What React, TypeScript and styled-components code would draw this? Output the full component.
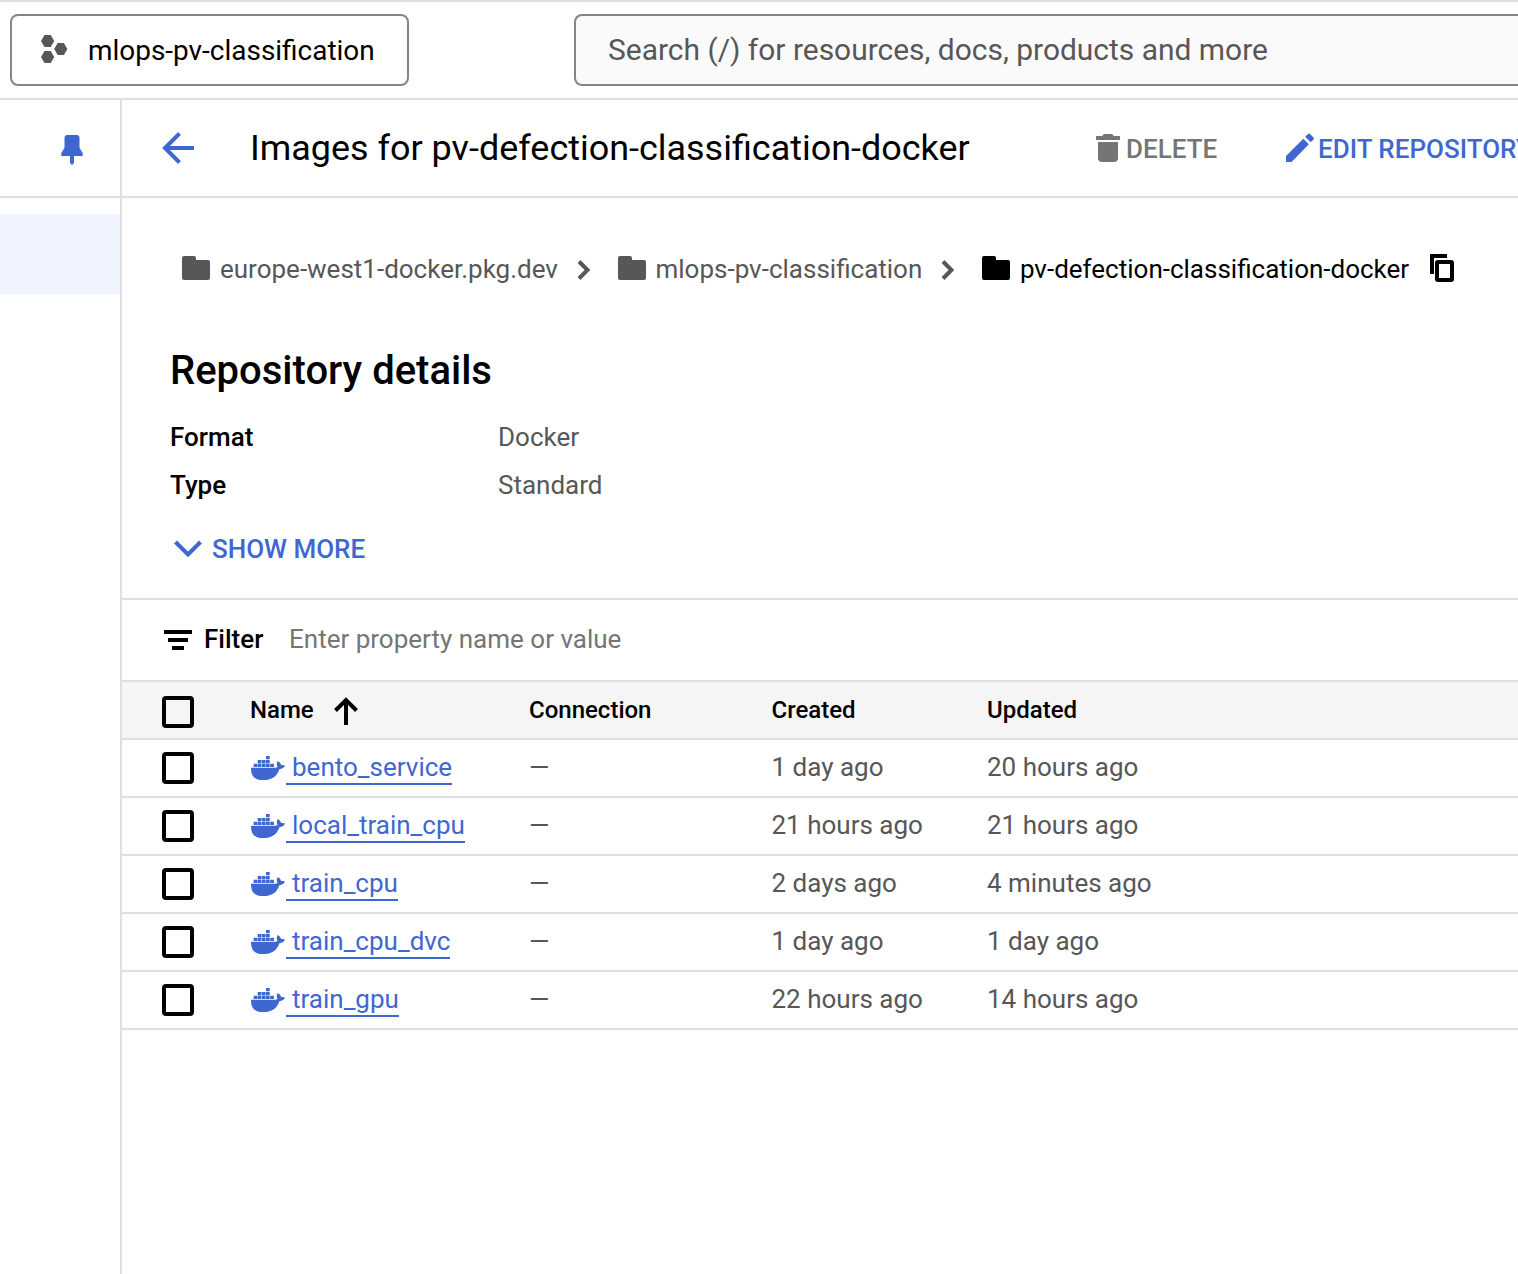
import React from "react";
import styled, { createGlobalStyle } from "styled-components";

const BLUE = "#3f67d2";
const GREY = "#575757";
const LINE = "#dfdfdf";

const GlobalStyle = createGlobalStyle`
  *, *::before, *::after { box-sizing: border-box; }
  body {
    margin: 0;
    background: #fff;
    color: #000;
    font-family: Roboto, "Liberation Sans", sans-serif;
    overflow: hidden;
  }
  svg { flex: none; }
`;

const Page = styled.div`
  display: flex;
  flex-direction: column;
  width: 1518px;
  height: 1274px;
  overflow: hidden;
  white-space: nowrap;
`;

const TopBar = styled.header`
  display: flex;
  flex: none;
  height: 100px;
  padding: 12px 0 0 10px;
  border-top: 2px solid ${LINE};
  border-bottom: 2px solid ${LINE};
`;

const ProjectPicker = styled.button`
  display: flex;
  flex: none;
  align-items: center;
  width: 399px;
  height: 72px;
  padding: 0 0 0 29px;
  gap: 19px;
  border: 2px solid #80868b;
  border-radius: 8px;
  background: #fff;
  color: #000;
  font: 400 27.95px/32px Roboto, sans-serif;

  svg { margin-bottom: 2px; }
`;

const ProjectName = styled.span`
  padding-top: 2px;
`;

const SearchBox = styled.div`
  display: flex;
  align-items: center;
  flex: none;
  width: 1000px;
  height: 72px;
  margin-left: 165px;
  padding: 0 0 2px 32px;
  border: 2px solid #80868b;
  border-radius: 8px;
  background: #fafafa;
  color: ${GREY};
  font-size: 29.95px;
`;

const Body = styled.div`
  display: flex;
  flex: 1;
  min-height: 0;
`;

const Sidebar = styled.nav`
  flex: none;
  width: 122px;
  border-right: 2px solid ${LINE};
`;

const PinCell = styled.div`
  height: 98px;
  padding: 34px 0 0 60px;
  border-bottom: 2px solid ${LINE};
`;

const ActiveItem = styled.div`
  height: 80px;
  margin-top: 16px;
  background: #f0f4ff;
`;

const Main = styled.main`
  flex: 1;
  min-width: 0;
  overflow: hidden;
`;

const TitleBar = styled.div`
  display: flex;
  align-items: center;
  height: 98px;
  padding-left: 40px;
  border-bottom: 2px solid ${LINE};
`;

const Title = styled.h1`
  flex: none;
  width: 846px;
  margin: 0 0 0 56px;
  font-size: 35.95px;
  font-weight: 400;
  line-height: 48px;
`;

const Action = styled.button<{ $color: string; $width: number }>`
  display: flex;
  flex: none;
  align-items: center;
  width: ${(p) => p.$width}px;
  padding: 0;
  border: 0;
  background: none;
  color: ${(p) => p.$color};
  font: 500 26px/32px Roboto, sans-serif;
  white-space: nowrap;
`;

const ActionLabel = styled.span`
  padding-top: 2px;
`;

const Crumbs = styled.div`
  display: flex;
  align-items: center;
  height: 142px;
  padding-left: 60px;
`;

const Crumb = styled.span<{ $current?: boolean }>`
  display: flex;
  align-items: center;
  gap: 10px;
  color: ${(p) => (p.$current ? "#000" : GREY)};
  font-size: 26px;
  line-height: 32px;

  svg { margin-bottom: 2px; }
`;

const Separator = styled.span`
  display: flex;
  padding: 2px 26.6px 0 19px;
`;

const CopyButton = styled.span`
  display: flex;
  margin-left: 20px;
  padding-bottom: 2px;
`;

const Details = styled.section`
  height: 260px;
  padding: 7px 0 0 48px;
  border-bottom: 2px solid ${LINE};
`;

const DetailsTitle = styled.h2`
  margin: 0 0 18px;
  font-size: 40px;
  font-weight: 500;
  line-height: 48px;
`;

const DetailRow = styled.div`
  display: grid;
  grid-template-columns: 328px 1fr;
  height: 48px;
  font-size: 26px;
  line-height: 48px;
`;

const DetailLabel = styled.span`
  font-weight: 500;
`;

const DetailValue = styled.span`
  color: ${GREY};
`;

const ShowMore = styled.button`
  display: flex;
  align-items: center;
  gap: 10px;
  margin: 24px 0 0;
  padding: 0 0 0 4px;
  border: 0;
  background: none;
  color: ${BLUE};
  font: 500 26px/32px Roboto, sans-serif;
`;

const FilterBar = styled.div`
  display: flex;
  align-items: center;
  height: 82px;
  padding: 0 0 2px 42px;
  border-bottom: 2px solid ${LINE};
  font-size: 26px;

  svg { margin-top: 2px; }
`;

const FilterLabel = styled.span`
  width: 85px;
  margin-left: 12px;
  font-weight: 500;
`;

const FilterHint = styled.span`
  color: #757575;
`;

const Row = styled.div<{ $head?: boolean }>`
  display: grid;
  grid-template-columns: 88px 279px 242.5px 215.5px 1fr;
  align-items: center;
  height: 58px;
  padding-left: 40px;
  border-bottom: 2px solid ${LINE};
  background: ${(p) => (p.$head ? "#f5f5f5" : "#fff")};
  color: ${(p) => (p.$head ? "#000" : GREY)};
  font-size: ${(p) => (p.$head ? 24 : 26)}px;
  font-weight: ${(p) => (p.$head ? 500 : 400)};
  line-height: 32px;
`;

const Checkbox = styled.span<{ $head?: boolean }>`
  width: 32px;
  height: 32px;
  margin-top: ${(p) => (p.$head ? 4 : 0)}px;
  border: 4px solid #000;
  border-radius: 4px;
`;

const SortHeader = styled.span`
  display: flex;
  align-items: center;
  gap: 19px;

  svg { margin-top: 2px; }
`;

const NameCell = styled.span`
  display: flex;
  align-items: center;
`;

const Cell = styled.span`
  padding-bottom: 2px;
`;

const ImageLink = styled.a`
  height: 34px;
  margin-bottom: 1px;
  padding-left: 6px;
  border-bottom: 2px solid ${BLUE};
  color: ${BLUE};
`;

const ProjectIcon = () => (
  <svg width="28" height="28" viewBox="0 0 28 28" fill={GREY}>
    <path d="M3.500 0h6.200L13.200 6 9.700 12H3.500L0 6zM3.500 16h6.200l3.500 6-3.500 6H3.500L0 22zM16.700 8h6.200l3.500 6-3.500 6h-6.200l-3.500-6z" />
  </svg>
);

const PinIcon = () => (
  <svg width="24" height="32" viewBox="0 0 24 32" fill={BLUE}>
    <path d="M7.500 1h9q3 0 3 3v10l3.200 5v3H14v7l-2 2-2-2v-7H1.300v-3l3.200-5V4q0-3 3-3z" />
  </svg>
);

const BackIcon = () => (
  <svg width="32" height="32" viewBox="0 0 32 32" fill="none" stroke={BLUE} strokeWidth="4">
    <path d="M32 16H3M17.500 1.500 3 16l14.500 14.500" />
  </svg>
);

const TrashIcon = () => (
  <svg width="30" height="30" viewBox="0 0 30 30" fill="currentColor">
    <path d="M0 3h6l2-2h8l2 2h6v4H0zM2 9h20v16q0 4-4 4H6q-4 0-4-4z" />
  </svg>
);

const PencilIcon = () => (
  <svg width="32" height="30" viewBox="0 0 32 30" fill="currentColor">
    <path d="M0 23 17.300 5.700l5.500 5.500L5.500 29H0zM19.200 3.800 22 1q1-1 2 0l3.500 3.500q1 1 0 2l-2.800 2.800z" />
  </svg>
);

const FolderIcon = () => (
  <svg width="28" height="24" viewBox="0 0 28 24" fill="currentColor">
    <path d="M2 0h10q2 0 2 2v2h12q2 0 2 2v16q0 2-2 2H2q-2 0-2-2V2q0-2 2-2z" />
  </svg>
);

const ChevronRight = () => (
  <svg width="14" height="20" viewBox="0 0 14 20" fill="none" stroke={GREY} strokeWidth="4">
    <path d="m2 1.500 8.500 8.500L2 18.500" />
  </svg>
);

const CopyIcon = () => (
  <svg width="26" height="30" viewBox="0 0 26 30" fill="none" stroke="#000" strokeWidth="4">
    <path d="M18 3H3v18" />
    <rect x="8" y="9" width="15" height="18" rx="1" />
  </svg>
);

const ChevronDown = () => (
  <svg width="28" height="18" viewBox="0 0 28 18" fill="none" stroke={BLUE} strokeWidth="4">
    <path d="m1.500 2 12.500 12.500L26.500 2" />
  </svg>
);

const FilterIcon = () => (
  <svg width="28" height="20" viewBox="0 0 28 20">
    <path d="M0 0h28v4H0zM4 8h20v4H4zM8 16h12v4H8z" />
  </svg>
);

const SortIcon = () => (
  <svg width="26" height="28" viewBox="0 0 26 28" fill="none" stroke="#000" strokeWidth="4">
    <path d="M13 28V4M2.500 13.500 13 3l10.500 10.500" />
  </svg>
);

const DockerIcon = () => (
  <svg width="36" height="26" viewBox="0 0 36 26" fill={BLUE}>
    <path d="M16 1h3.700v3.200H16zM7.700 5h3.700v3.200H7.700zM11.900 5h3.700v3.200h-3.700zM16 5h3.700v3.200H16zM3.600 8.800h3.700V12H3.600zM7.700 8.800h3.700V12H7.700zM11.900 8.800h3.700V12h-3.700zM16 8.800h3.700V12H16zM20.200 8.800h3.700V12h-3.700z" />
    <path d="M1 12.700h24q1.800 0 2.600-.8-1.800-3.300.2-6 3 1.600 3.300 4.100 2.200-.4 3.900.6-1.200 3.400-5.600 3.600C27 21.500 21.500 25 13 25 5 25 1 21.500 1 12.700z" />
  </svg>
);

const images = [
  { name: "bento_service", created: "1 day ago", updated: "20 hours ago" },
  { name: "local_train_cpu", created: "21 hours ago", updated: "21 hours ago" },
  { name: "train_cpu", created: "2 days ago", updated: "4 minutes ago" },
  { name: "train_cpu_dvc", created: "1 day ago", updated: "1 day ago" },
  { name: "train_gpu", created: "22 hours ago", updated: "14 hours ago" },
];

export default function App() {
  return (
    <Page>
      <GlobalStyle />
      <TopBar>
        <ProjectPicker>
          <ProjectIcon />
          <ProjectName>mlops-pv-classification</ProjectName>
        </ProjectPicker>
        <SearchBox>Search (/) for resources, docs, products and more</SearchBox>
      </TopBar>
      <Body>
        <Sidebar>
          <PinCell>
            <PinIcon />
          </PinCell>
          <ActiveItem />
        </Sidebar>
        <Main>
          <TitleBar>
            <BackIcon />
            <Title>Images for pv-defection-classification-docker</Title>
            <Action $color="#757575" $width={190}>
              <TrashIcon />
              <ActionLabel>DELETE</ActionLabel>
            </Action>
            <Action $color={BLUE} $width={300}>
              <PencilIcon />
              <ActionLabel>EDIT REPOSITORY</ActionLabel>
            </Action>
          </TitleBar>
          <Crumbs>
            <Crumb>
              <FolderIcon />
              europe-west1-docker.pkg.dev
            </Crumb>
            <Separator>
              <ChevronRight />
            </Separator>
            <Crumb>
              <FolderIcon />
              mlops-pv-classification
            </Crumb>
            <Separator>
              <ChevronRight />
            </Separator>
            <Crumb $current>
              <FolderIcon />
              pv-defection-classification-docker
            </Crumb>
            <CopyButton>
              <CopyIcon />
            </CopyButton>
          </Crumbs>
          <Details>
            <DetailsTitle>Repository details</DetailsTitle>
            <DetailRow>
              <DetailLabel>Format</DetailLabel>
              <DetailValue>Docker</DetailValue>
            </DetailRow>
            <DetailRow>
              <DetailLabel>Type</DetailLabel>
              <DetailValue>Standard</DetailValue>
            </DetailRow>
            <ShowMore>
              <ChevronDown />
              SHOW MORE
            </ShowMore>
          </Details>
          <FilterBar>
            <FilterIcon />
            <FilterLabel>Filter</FilterLabel>
            <FilterHint>Enter property name or value</FilterHint>
          </FilterBar>
          <Row $head>
            <Checkbox $head />
            <SortHeader>
              Name
              <SortIcon />
            </SortHeader>
            <span>Connection</span>
            <span>Created</span>
            <span>Updated</span>
          </Row>
          {images.map((image) => (
            <Row key={image.name}>
              <Checkbox />
              <NameCell>
                <DockerIcon />
                <ImageLink>{image.name}</ImageLink>
              </NameCell>
              <Cell>—</Cell>
              <Cell>{image.created}</Cell>
              <Cell>{image.updated}</Cell>
            </Row>
          ))}
        </Main>
      </Body>
    </Page>
  );
}
